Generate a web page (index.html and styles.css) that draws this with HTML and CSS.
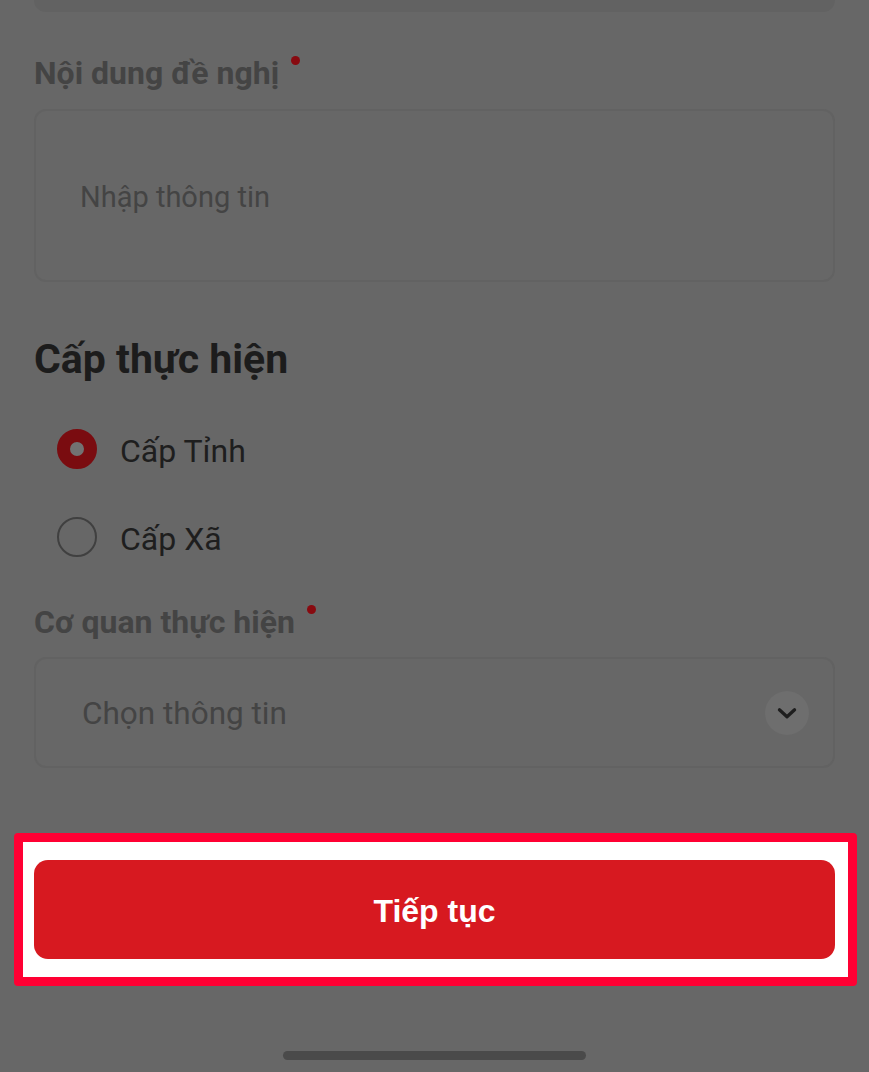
FILE: index.html
```html
<!DOCTYPE html>
<html lang="vi">
<head>
<meta charset="utf-8">
<title>Cấp thực hiện</title>
<link rel="stylesheet" href="styles.css">
</head>
<body>
<div class="page">
  <div class="content">
    <div class="top-box"></div>

    <label class="field-label label-first">Nội dung đề nghị<span class="req"></span></label>
    <div class="textarea">
      <span class="placeholder">Nhập thông tin</span>
    </div>

    <h2 class="section-title">Cấp thực hiện</h2>

    <div class="radio-group">
      <div class="radio-row">
        <span class="radio radio-on"></span>
        <span class="radio-text">Cấp Tỉnh</span>
      </div>
      <div class="radio-row">
        <span class="radio"></span>
        <span class="radio-text">Cấp Xã</span>
      </div>
    </div>

    <label class="field-label label-second">Cơ quan thực hiện<span class="req"></span></label>
    <div class="select">
      <span class="select-text">Chọn thông tin</span>
      <span class="chevron">
        <svg width="26" height="26" viewBox="0 0 24 24"><path d="M5 9l7 6.5L19 9" fill="none" stroke="#1e1e1e" stroke-width="3" stroke-linecap="round" stroke-linejoin="round"/></svg>
      </span>
    </div>
  </div>

  <div class="highlight">
    <button class="btn-primary">Tiếp tục</button>
  </div>

  <div class="home-indicator"></div>
</div>
</body>
</html>
```

FILE: styles.css
```css
* { box-sizing: border-box; }

html, body {
  margin: 0;
  padding: 0;
  background: #676767;
}

body {
  font-family: Roboto, "Noto Sans", Arial, sans-serif;
  width: 869px;
  height: 1072px;
  overflow: hidden;
}

.page {
  display: flex;
  flex-direction: column;
}

.content {
  display: flex;
  flex-direction: column;
  padding: 0 34px;
}

.top-box {
  height: 12px;
  background: #626262;
  border-radius: 0 0 14px 14px;
}

.field-label {
  display: block;
  font-size: 32px;
  line-height: 36px;
  font-weight: 700;
  color: #444444;
}

.label-first { margin-top: 43px; }
.label-second { margin-top: 47px; }

.req {
  display: inline-block;
  width: 9px;
  height: 9px;
  border-radius: 50%;
  background: #880a10;
  margin-left: 12px;
  vertical-align: top;
  margin-top: 1px;
}

.textarea {
  margin-top: 18px;
  height: 173px;
  border: 2px solid #626262;
  border-radius: 12px;
  padding: 0 44px;
  display: flex;
  align-items: center;
}

.placeholder {
  font-size: 29px;
  line-height: 36px;
  color: #444444;
  padding-top: 3px;
}

.section-title {
  margin: 54px 0 0;
  font-size: 41px;
  line-height: 46px;
  font-weight: 700;
  color: #1c1c1c;
}

.radio-group {
  display: flex;
  flex-direction: column;
  gap: 48px;
  margin-top: 47px;
  padding-left: 23px;
}

.radio-row {
  display: flex;
  align-items: center;
  gap: 23px;
  height: 40px;
}

.radio {
  width: 40px;
  height: 40px;
  border-radius: 50%;
  border: 2px solid #404040;
  flex: none;
}

.radio-on {
  border: 13px solid #7a0c10;
  background: #727272;
}

.radio-text {
  font-size: 32px;
  line-height: 40px;
  color: #1e1e1e;
  padding-top: 4px;
}

.select {
  margin-top: 17px;
  height: 111px;
  border: 2px solid #626262;
  border-radius: 12px;
  padding: 0 24px 0 46px;
  display: flex;
  align-items: center;
  justify-content: space-between;
}

.select-text {
  font-size: 31.5px;
  line-height: 36px;
  color: #444444;
  padding-top: 3px;
}

.chevron {
  width: 44px;
  height: 44px;
  border-radius: 50%;
  background: #6e6e6e;
  display: flex;
  align-items: center;
  justify-content: center;
}

.highlight {
  margin: 65px 12px 0 14px;
  border: 9px solid #ff0033;
  border-radius: 4px;
  background: #ffffff;
  padding: 18px 13px 18px 11px;
}

.btn-primary {
  display: block;
  width: 100%;
  height: 99px;
  border: none;
  border-radius: 14px;
  background: #d71920;
  color: #ffffff;
  font-family: "Liberation Sans", Arial, sans-serif;
  font-size: 32px;
  font-weight: 700;
  padding-top: 4px;
  cursor: pointer;
}

.home-indicator {
  align-self: flex-start;
  margin: 65px 0 0 283px;
  width: 303px;
  height: 9px;
  border-radius: 5px;
  background: #4a4a4a;
}
```
